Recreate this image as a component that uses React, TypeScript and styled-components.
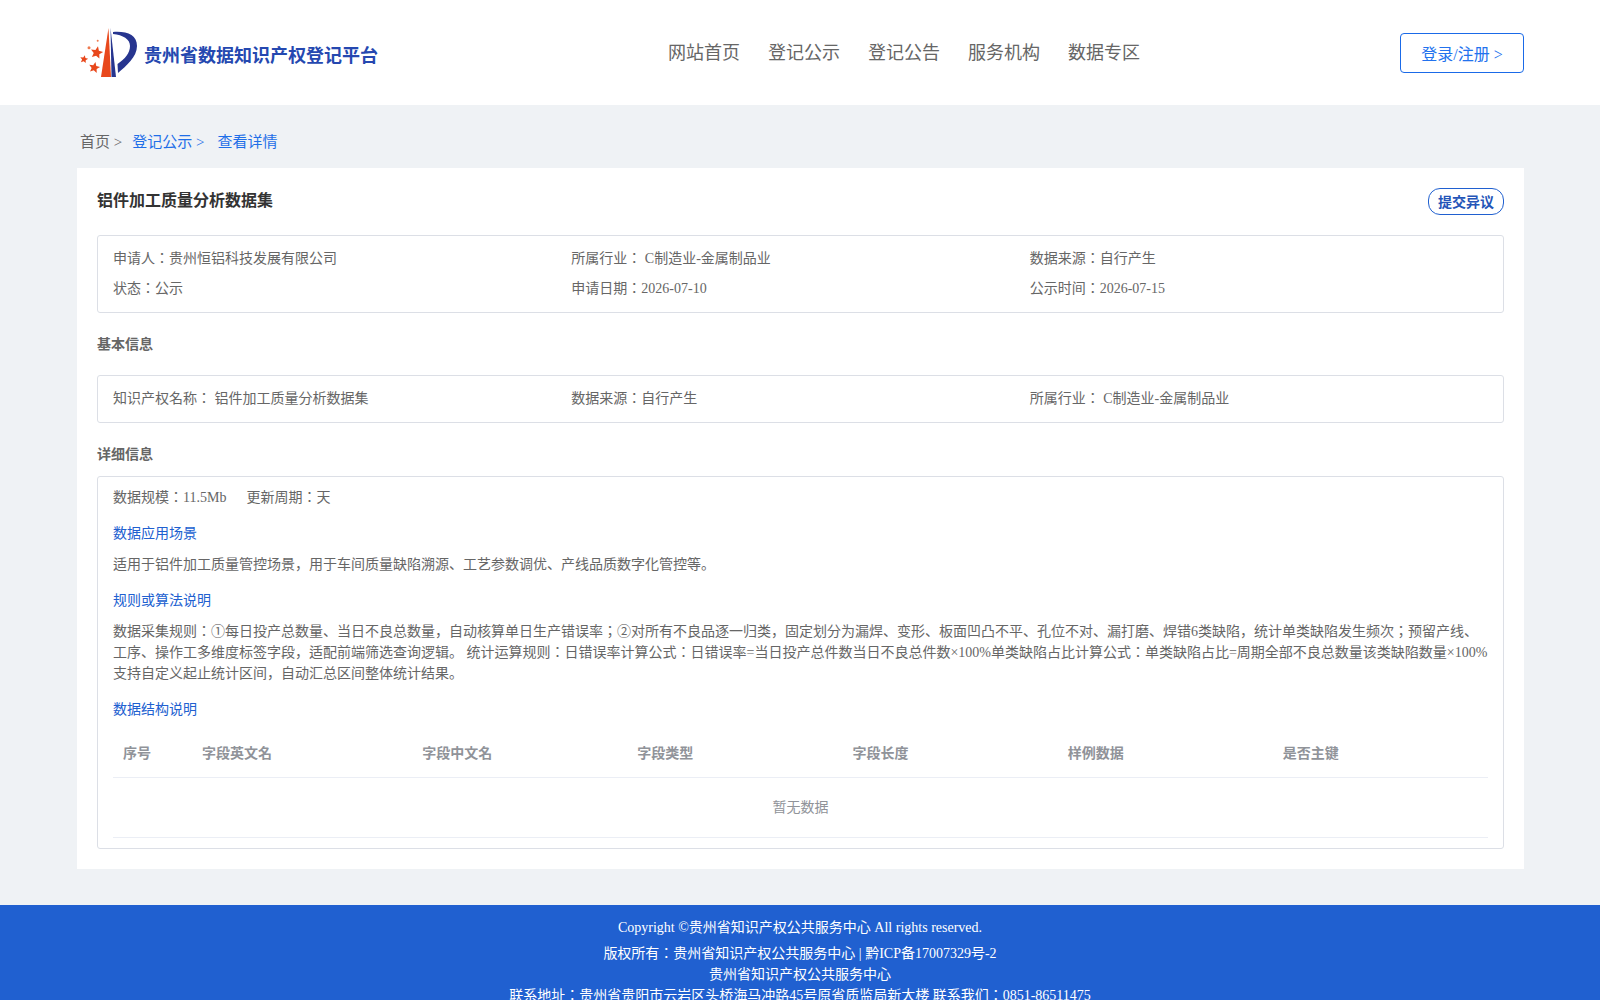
import React, { FC } from 'react';
import styled, { createGlobalStyle } from 'styled-components';

const GlobalStyle = createGlobalStyle`
  html, body {
    margin: 0;
    padding: 0;
    background: #eff2f5;
    font-family: "Liberation Serif", "Noto Sans CJK JP", serif;
  }
  * { box-sizing: border-box; }
`;

const Header = styled.header`
  height: 105px;
  background: #fff;
  padding: 0 76px 0 77px;
  display: grid;
  grid-template-columns: 591px 1fr auto;
  align-items: center;
`;

const Brand = styled.div`
  display: flex;
  align-items: center;
  gap: 5px;
  padding-left: 2px;
`;

const BrandName = styled.span`
  font-family: "Liberation Sans", "Noto Sans CJK JP", sans-serif;
  font-size: 18px;
  font-weight: 700;
  color: #2548b0;
  padding-top: 2px;
`;

const Nav = styled.nav`
  display: flex;
  gap: 28px;
  margin-top: 1px;
`;

const NavItem = styled.a`
  font-size: 18px;
  line-height: 24px;
  color: #666;
`;

const LoginButton = styled.a`
  width: 124px;
  height: 40px;
  border: 1px solid #1a6ae8;
  border-radius: 4px;
  display: flex;
  align-items: center;
  justify-content: center;
  font-size: 16px;
  color: #2272ee;
`;

const Main = styled.main`
  padding: 0 76px 36px 77px;
`;

const Crumbs = styled.div`
  height: 63px;
  padding: 27px 3px 0;
  display: flex;
  font-size: 15px;
  line-height: 20px;
`;

const Crumb = styled.span<{ $active?: boolean; $gap: number }>`
  color: ${(p) => (p.$active ? '#1f6fe8' : '#666')};
  margin-right: ${(p) => p.$gap}px;
`;

const Card = styled.section`
  background: #fff;
  padding: 20px;
`;

const TitleRow = styled.div`
  display: flex;
  justify-content: space-between;
  align-items: flex-start;
  height: 47px;
`;

const Title = styled.h1`
  margin: 1px 0 0;
  font-family: "Liberation Sans", "Noto Sans CJK JP", sans-serif;
  font-size: 16px;
  line-height: 24px;
  font-weight: 700;
  color: #333;
`;

const ObjectionButton = styled.a`
  width: 76px;
  height: 27px;
  padding-bottom: 2px;
  border: 1px solid #2060d0;
  border-radius: 12px;
  display: flex;
  align-items: center;
  justify-content: center;
  font-family: "Liberation Sans", "Noto Sans CJK JP", sans-serif;
  font-size: 14px;
  font-weight: 700;
  color: #2455b8;
`;

const Box = styled.div`
  border: 1px solid #dcdfe6;
  border-radius: 3px;
  padding: 0 15px;
  font-size: 14px;
  color: #666;
`;

const InfoGrid = styled(Box)<{ $height: number }>`
  height: ${(p) => p.$height}px;
  padding-bottom: 2px;
  display: grid;
  grid-template-columns: repeat(3, 1fr);
  align-content: center;
  row-gap: 9px;
  line-height: 21px;
`;

const SectionTitle = styled.h2<{ $height: number }>`
  margin: 0;
  height: ${(p) => p.$height}px;
  padding-top: 20px;
  font-family: "Liberation Sans", "Noto Sans CJK JP", sans-serif;
  font-size: 14px;
  line-height: 22px;
  font-weight: 700;
  color: #666;
`;

const DetailBox = styled(Box)`
  padding-top: 10px;
  padding-bottom: 10px;
  line-height: 21px;
`;

const Stats = styled.div`
  display: flex;
  gap: 20px;
`;

const SubTitle = styled.div`
  color: #2060d0;
  margin-top: 15px;
`;

const Paragraph = styled.p`
  margin: 10px 0 0;
`;

const FieldTable = styled.table`
  width: 100%;
  margin-top: 11px;
  border-collapse: collapse;
  table-layout: fixed;
`;

const HeadCell = styled.th<{ $width: number }>`
  width: ${(p) => p.$width}px;
  height: 46px;
  padding: 0 10px;
  text-align: left;
  font-family: "Liberation Sans", "Noto Sans CJK JP", sans-serif;
  font-size: 14px;
  font-weight: 700;
  color: #909399;
  border-bottom: 1px solid #ebeef5;
`;

const EmptyCell = styled.td`
  height: 60px;
  text-align: center;
  color: #909399;
  border-bottom: 1px solid #ebeef5;
`;

const Footer = styled.footer`
  background: #2060d0;
  color: #fff;
  padding: 12px 0 10px;
  text-align: center;
  font-size: 14px;
  line-height: 21px;
`;

const Copyright = styled.div`
  margin-bottom: 5px;
`;

const starPoints = (cx: number, cy: number, r: number) =>
  Array.from({ length: 10 }, (_, i) => {
    const radius = i % 2 === 0 ? r : r * 0.46;
    const angle = (Math.PI / 5) * i - Math.PI / 2 + 0.2;
    return `${cx + radius * Math.cos(angle)},${cy + radius * Math.sin(angle)}`;
  }).join(' ');

const Logo: FC = () => (
  <svg width="60" height="52" viewBox="0 0 60 52">
    <path d="M29.500 1 L32 50 L22 50 Z" fill="#e8481c" />
    <path d="M31.500 1 L37 50 L32.500 50 Z" fill="#27358f" />
    <path d="M34 5 C48 4 58 8 58 19 C58 30 47 39 39 46 L38.500 37 C46 32 51 26 51 19 C51 12 44 8 34 7 Z" fill="#27358f" />
    <polygon points={starPoints(17.700, 25.700, 6.500)} fill="#e8481c" />
    <polygon points={starPoints(5, 32.300, 4.200)} fill="#e8481c" />
    <polygon points={starPoints(15.300, 40.700, 5.800)} fill="#e8481c" />
    <circle cx="10" cy="20.700" r="1.500" fill="#ee7a50" />
    <circle cx="18.700" cy="13.700" r="1" fill="#ee7a50" />
  </svg>
);

const headers: [string, number][] = [
  ['序号', 79],
  ['字段英文名', 220],
  ['字段中文名', 215],
  ['字段类型', 215],
  ['字段长度', 215],
  ['样例数据', 215],
  ['是否主键', 215],
];

const App: FC = () => (
  <>
    <GlobalStyle />
    <Header>
      <Brand>
        <Logo />
        <BrandName>贵州省数据知识产权登记平台</BrandName>
      </Brand>
      <Nav>
        <NavItem>网站首页</NavItem>
        <NavItem>登记公示</NavItem>
        <NavItem>登记公告</NavItem>
        <NavItem>服务机构</NavItem>
        <NavItem>数据专区</NavItem>
      </Nav>
      <LoginButton>登录/注册 &gt;</LoginButton>
    </Header>
    <Main>
      <Crumbs>
        <Crumb $gap={10}>首页 &gt;</Crumb>
        <Crumb $active $gap={13}>登记公示 &gt;</Crumb>
        <Crumb $active $gap={0}>查看详情</Crumb>
      </Crumbs>
      <Card>
        <TitleRow>
          <Title>铝件加工质量分析数据集</Title>
          <ObjectionButton>提交异议</ObjectionButton>
        </TitleRow>
        <InfoGrid $height={78}>
          <span>申请人：贵州恒铝科技发展有限公司</span>
          <span>所属行业： C制造业-金属制品业</span>
          <span>数据来源：自行产生</span>
          <span>状态：公示</span>
          <span>申请日期：2026-07-10</span>
          <span>公示时间：2026-07-15</span>
        </InfoGrid>
        <SectionTitle $height={62}>基本信息</SectionTitle>
        <InfoGrid $height={48}>
          <span>知识产权名称： 铝件加工质量分析数据集</span>
          <span>数据来源：自行产生</span>
          <span>所属行业： C制造业-金属制品业</span>
        </InfoGrid>
        <SectionTitle $height={53}>详细信息</SectionTitle>
        <DetailBox>
          <Stats>
            <span>数据规模：11.5Mb</span>
            <span>更新周期：天</span>
          </Stats>
          <SubTitle>数据应用场景</SubTitle>
          <Paragraph>适用于铝件加工质量管控场景，用于车间质量缺陷溯源、工艺参数调优、产线品质数字化管控等。</Paragraph>
          <SubTitle>规则或算法说明</SubTitle>
          <Paragraph>
            数据采集规则：①每日投产总数量、当日不良总数量，自动核算单日生产错误率；②对所有不良品逐一归类，固定划分为漏焊、变形、板面凹凸不平、孔位不对、漏打磨、焊错6类缺陷，统计单类缺陷发生频次；预留产线、工序、操作工多维度标签字段，适配前端筛选查询逻辑。 统计运算规则：日错误率计算公式：日错误率=当日投产总件数当日不良总件数×100%单类缺陷占比计算公式：单类缺陷占比=周期全部不良总数量该类缺陷数量×100% 支持自定义起止统计区间，自动汇总区间整体统计结果。
          </Paragraph>
          <SubTitle>数据结构说明</SubTitle>
          <FieldTable>
            <thead>
              <tr>
                {headers.map(([label, width]) => (
                  <HeadCell key={label} $width={width}>{label}</HeadCell>
                ))}
              </tr>
            </thead>
            <tbody>
              <tr>
                <EmptyCell colSpan={7}>暂无数据</EmptyCell>
              </tr>
            </tbody>
          </FieldTable>
        </DetailBox>
      </Card>
    </Main>
    <Footer>
      <Copyright>Copyright ©贵州省知识产权公共服务中心 All rights reserved.</Copyright>
      <div>版权所有：贵州省知识产权公共服务中心 | 黔ICP备17007329号-2</div>
      <div>贵州省知识产权公共服务中心</div>
      <div>联系地址：贵州省贵阳市云岩区头桥海马冲路45号原省质监局新大楼 联系我们：0851-86511475</div>
    </Footer>
  </>
);

export default App;
